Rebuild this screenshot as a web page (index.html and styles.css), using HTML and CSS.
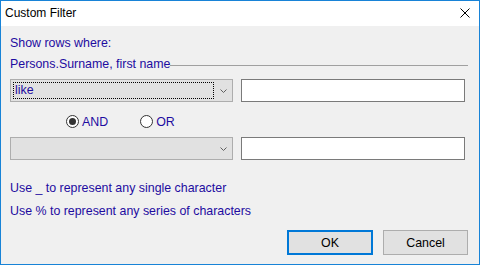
FILE: index.html
```html
<!DOCTYPE html>
<html lang="en">
<head>
    <meta charset="UTF-8">
    <title>Custom Filter</title>
    <link rel="stylesheet" href="styles.css">
</head>
<body>
    <div class="window">
        <div class="titlebar">
            <span class="title">Custom Filter</span>
            <svg class="close" width="10" height="10" viewBox="0 0 10 10">
                <path d="M0.5 0.5 L9.5 9.5 M9.5 0.5 L0.5 9.5" stroke="#000" stroke-width="1" fill="none"/>
            </svg>
        </div>

        <div class="content">
            <div class="label">Show rows where:</div>

            <div class="group">
                <span class="label">Persons.Surname, first name</span>
                <span class="group-line"></span>
            </div>

            <div class="row first-row">
                <div class="combo">
                    <div class="combo-text focused">like</div>
                    <svg class="chevron" width="7" height="4" viewBox="0 0 7 4">
                        <path d="M0.5 0.5 L3.5 3.5 L6.5 0.5" stroke="#606060" fill="none"/>
                    </svg>
                </div>
                <div class="textbox"></div>
            </div>

            <div class="radios">
                <label class="radio">
                    <span class="circle checked"></span>
                    <span class="label">AND</span>
                </label>
                <label class="radio">
                    <span class="circle"></span>
                    <span class="label">OR</span>
                </label>
            </div>

            <div class="row second-row">
                <div class="combo">
                    <div class="combo-text"></div>
                    <svg class="chevron" width="7" height="4" viewBox="0 0 7 4">
                        <path d="M0.5 0.5 L3.5 3.5 L6.5 0.5" stroke="#606060" fill="none"/>
                    </svg>
                </div>
                <div class="textbox"></div>
            </div>

            <div class="hints">
                <div class="label">Use _ to represent any single character</div>
                <div class="label">Use % to represent any series of characters</div>
            </div>

            <div class="buttons">
                <button class="btn btn-default">OK</button>
                <button class="btn">Cancel</button>
            </div>
        </div>
    </div>
</body>
</html>
```

FILE: styles.css
```css
* {
    box-sizing: border-box;
}
body {
    margin: 0;
    font-family: "Liberation Sans", Arial, sans-serif;
    font-size: 12px;
}
.window {
    width: 480px;
    height: 265px;
    border: 1px solid #1883d7;
    background-color: #f0f0f0;
    display: flex;
    flex-direction: column;
}
.titlebar {
    height: 25px;
    flex-shrink: 0;
    background: white;
    display: flex;
    align-items: center;
    justify-content: space-between;
    padding: 0 9px 0 4px;
    color: #000;
}
.title {
    margin-top: -1px;
}
.close {
    margin-top: -1px;
}
.content {
    padding: 10px 11px 0 9px;
    display: flex;
    flex-direction: column;
}
.label {
    color: #1e0ca0;
    font-size: 12.4px;
    line-height: 14px;
    white-space: nowrap;
}
.group {
    display: flex;
    align-items: center;
    margin-top: 7px;
    height: 14px;
}
.group-line {
    flex-grow: 1;
    height: 1px;
    background: #a0a0a0;
    margin-top: 2px;
}
.row {
    display: flex;
    gap: 8px;
}
.first-row {
    margin-top: 8px;
}
.second-row {
    margin-top: 9px;
}
.combo {
    width: 223px;
    height: 23px;
    border: 1px solid #adadad;
    background: #e1e1e1;
    display: flex;
    align-items: center;
    padding: 0 5px 0 2px;
}
.combo-text {
    flex-grow: 1;
    height: 17px;
    margin-right: 6px;
    border: 1px dotted transparent;
    padding-left: 1px;
    color: #1e0ca0;
    font-size: 12.4px;
    line-height: 15px;
}
.combo-text.focused {
    border-color: #000;
}
.textbox {
    width: 224px;
    height: 23px;
    border: 1px solid #7a7a7a;
    background: white;
}
.radios {
    display: flex;
    margin: 13px 0 0 56px;
    gap: 32px;
    height: 13px;
}
.radio {
    display: flex;
    align-items: center;
    gap: 3px;
}
.circle {
    width: 13px;
    height: 13px;
    border: 1px solid #333;
    border-radius: 50%;
    background: white;
    position: relative;
}
.circle.checked::after {
    content: "";
    position: absolute;
    left: 2px;
    top: 2px;
    width: 7px;
    height: 7px;
    border-radius: 50%;
    background: #333;
}
.hints {
    margin-top: 21px;
    display: flex;
    flex-direction: column;
    gap: 9px;
}
.buttons {
    display: flex;
    justify-content: flex-end;
    gap: 10px;
    margin-top: 12px;
}
.btn {
    font-family: "Liberation Sans", Arial, sans-serif;
    font-size: 12.4px;
    color: #000;
    background: #e1e1e1;
    border: 1px solid #adadad;
    width: 85px;
    height: 25px;
    padding: 0;
}
.btn-default {
    border: 2px solid #0078d7;
    width: 86px;
}
```
